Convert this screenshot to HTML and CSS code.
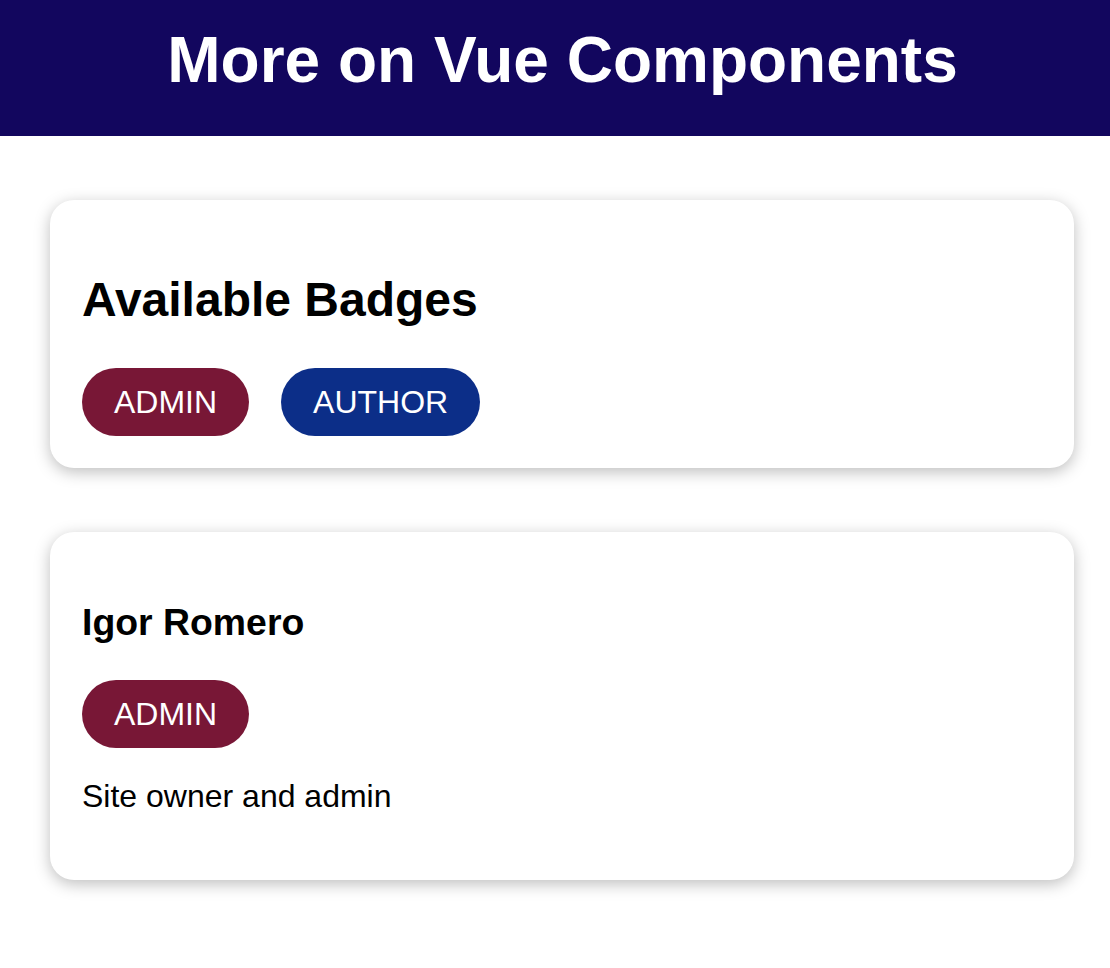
FILE: index.html
```html
<!DOCTYPE html>
<html lang="en">
<head>
<meta charset="utf-8">
<title>More on Vue Components</title>
<link rel="stylesheet" href="styles.css">
</head>
<body>
<header class="site-header">
  <h1 class="site-title">More on Vue Components</h1>
</header>
<main class="content">
  <section class="card">
    <h2 class="card-title">Available Badges</h2>
    <div class="badge-list">
      <span class="badge badge-admin">ADMIN</span>
      <span class="badge badge-author">AUTHOR</span>
    </div>
  </section>
  <section class="card">
    <h3 class="user-name">Igor Romero</h3>
    <div class="badge-list">
      <span class="badge badge-admin">ADMIN</span>
    </div>
    <p class="user-info">Site owner and admin</p>
  </section>
</main>
</body>
</html>
```

FILE: styles.css
```css
* {
  box-sizing: border-box;
}

html {
  font-size: 32px;
}

body {
  margin: 0;
  font-family: "Liberation Sans", Arial, Helvetica, sans-serif;
  color: #000;
  background: #fff;
}

.site-header {
  height: 136px;
  padding: 23px 0 0 15px;
  background: #12065e;
  color: #fff;
  text-align: center;
}

.site-title {
  margin: 0;
  font-size: 64px;
  font-weight: bold;
  line-height: normal;
}

.content {
  display: flex;
  flex-direction: column;
  gap: 64px;
  padding: 64px 36px 64px 50px;
}

.card {
  padding: 32px;
  border-radius: 24px;
  background: #fff;
  box-shadow: 0 4px 16px rgba(0, 0, 0, 0.26);
}

.card-title {
  margin: 40px 0 41px;
  font-size: 48px;
  font-weight: bold;
  line-height: normal;
}

.user-name {
  margin: 37px 0 36px;
  font-size: 37.4px;
  font-weight: bold;
  line-height: normal;
}

.badge-list {
  display: flex;
  gap: 32px;
}

.badge {
  display: inline-block;
  padding: 15px 32px;
  border-radius: 34px;
  color: #fff;
  font-size: 32px;
  line-height: 38px;
}

.badge-admin {
  background: #781736;
}

.badge-author {
  background: #0c2e88;
}

.user-info {
  margin: 30px 0 33px;
  font-size: 32px;
  line-height: normal;
}
```
